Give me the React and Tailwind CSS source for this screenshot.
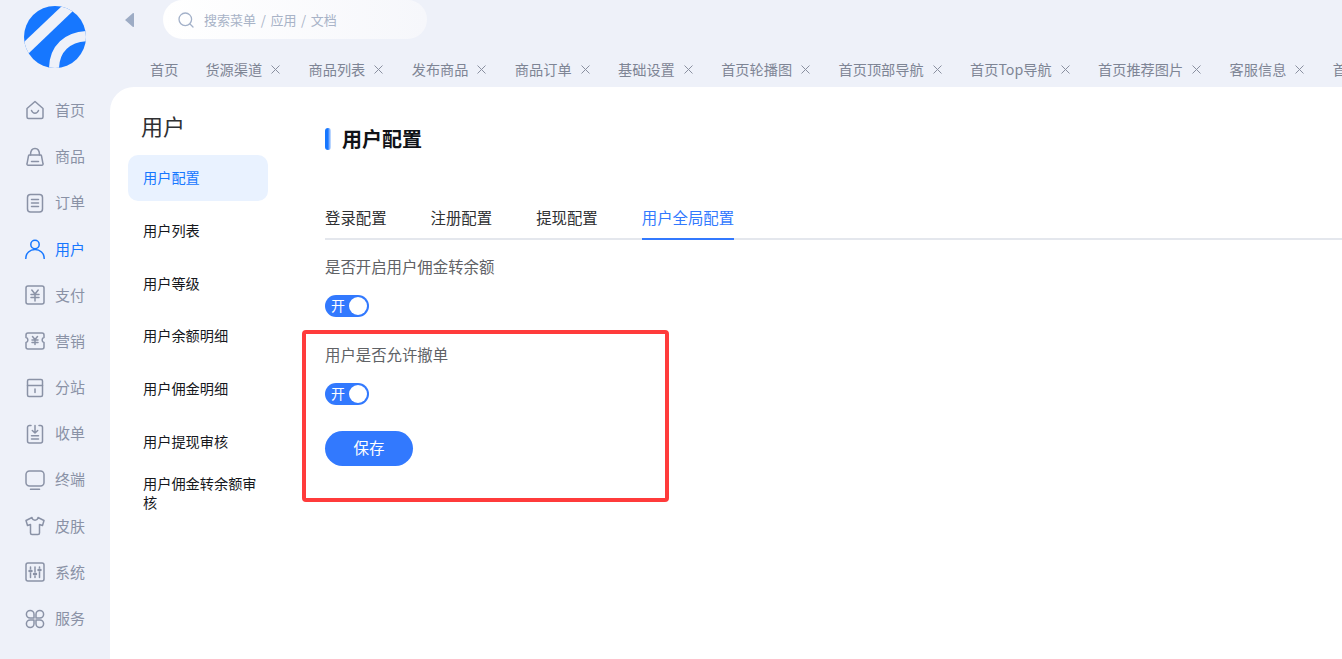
import React from 'react';

const font = { fontFamily: '"Noto Sans CJK SC", "Liberation Sans", sans-serif' };

const Logo = () => (
    <svg width="62" height="62" viewBox="0 0 62 62">
        <defs>
            <clipPath id="logoClip"><circle cx="31" cy="31" r="31" /></clipPath>
        </defs>
        <g clipPath="url(#logoClip)">
            <rect width="62" height="62" fill="#1677ff" />
            <polygon points="40,-2 50,4 4,48 -2,38" fill="#eef1f9" />
            <path d="M66 30 C44 30 29 42 30 66" fill="none" stroke="#eef1f9" strokeWidth="10" />
        </g>
    </svg>
);

const navIcons = {
    home: <><path d="M2 8.500 10 1.500l8 7V17a1.500 1.500 0 0 1-1.500 1.500h-13A1.500 1.500 0 0 1 2 17Z" /><path d="M6.500 10.500c1.500 3.500 5.500 3.500 7 0" /></>,
    goods: <><path d="M4.500 8h11a1 1 0 0 1 1 .8l1.500 8a1.200 1.200 0 0 1-1.200 1.500H3.200A1.200 1.200 0 0 1 2 16.800l1.500-8a1 1 0 0 1 1-.8Z" /><path d="M5.500 8C5.500 3.500 7.500 1.500 10 1.500s4.500 2 4.500 6.500" /><path d="M6.500 14.500h7" /></>,
    order: <><rect x="2.500" y="1.500" width="15" height="17.500" rx="3" /><path d="M6.500 6.500h7M6.500 10h7M6.500 13.500h7" /></>,
    user: <><circle cx="10" cy="5.500" r="4.200" /><path d="M.8 19.500C.8 14 5 10.500 10 10.500s9.200 3.500 9.200 9" /></>,
    pay: <><rect x="1" y="1" width="18" height="18" rx="2" /><path d="m6.800 5 3.200 4 3.200-4M6 9.500h8M6 12.500h8M10 9v7" /></>,
    market: <><path d="M3 2h14a2 2 0 0 1 2 2v2.500c-2.500.5-2.500 4.500 0 5V16a2 2 0 0 1-2 2H3a2 2 0 0 1-2-2v-4.500c2.500-.5 2.500-4.500 0-5V4a2 2 0 0 1 2-2Z" /><path d="m7.500 5.500 2.500 3 2.500-3M7 9h6M7 11.500h6M10 8.500v5" /></>,
    branch: <><path d="M4 1.500h12a1.500 1.500 0 0 1 1.500 1.500v4.500h-15V3A1.500 1.500 0 0 1 4 1.500Z" /><path d="M2.500 7.500V17A1.500 1.500 0 0 0 4 18.500h12a1.500 1.500 0 0 0 1.500-1.500V7.500" /><path d="M10 11v3.500" /></>,
    receipt: <><path d="M6 1.500H4.500a2 2 0 0 0-2 2V17a2 2 0 0 0 2 2h11a2 2 0 0 0 2-2V3.500a2 2 0 0 0-2-2H14" /><path d="M10 1.500V9M7.300 6.500 10 9l2.700-2.500M6.500 11.800h7M6.500 15h7" /></>,
    terminal: <><rect x="1" y="1" width="18" height="15" rx="3.500" /><path d="M5.500 19.300h9" /></>,
    skin: <path d="M7 1.500 1 4.500l1.500 5 3-1V17a1.500 1.500 0 0 0 1.500 1.500h6a1.500 1.500 0 0 0 1.500-1.500V8.500l3 1 1.500-5-6-3c-.5 3.500-5.500 3.500-6 0Z" />,
    system: <><rect x="1" y="1" width="18" height="18" rx="2" /><path d="M5.500 5v2M5.500 11v4.500M10 5v5M10 14v1.500M14.500 5v1M14.500 10v5.500" /><path d="M4.500 9h2M9 12h2M13.500 8h2" strokeWidth="2.400" /></>,
    service: <path d="M9 9H5.200a3.800 3.800 0 1 1 3.800-3.800ZM11 9V5.200A3.800 3.800 0 1 1 14.800 9ZM9 11v3.800A3.800 3.800 0 1 1 5.200 11ZM11 11h3.800a3.800 3.800 0 1 1-3.800 3.800Z" />,
};

const navItems = [
    ['首页', 'home'], ['商品', 'goods'], ['订单', 'order'], ['用户', 'user'],
    ['支付', 'pay'], ['营销', 'market'], ['分站', 'branch'], ['收单', 'receipt'],
    ['终端', 'terminal'], ['皮肤', 'skin'], ['系统', 'system'], ['服务', 'service'],
];

const tabs = ['货源渠道', '商品列表', '发布商品', '商品订单', '基础设置', '首页轮播图', '首页顶部导航', '首页Top导航', '首页推荐图片', '客服信息'];

const menu = ['用户列表', '用户等级', '用户余额明细', '用户佣金明细', '用户提现审核'];

const NavItem = ({ label, icon }) => {
    const active = label === '用户';
    return (
        <div className={active ? 'flex h-[46.2px] items-center text-[#1677ff]' : 'flex h-[46.2px] items-center text-[#8a92a6]'}>
            <svg className="ml-[25px] shrink-0" width="20" height="20" viewBox="0 0 20 20" fill="none" stroke="currentColor" strokeWidth="1.500" strokeLinecap="round" strokeLinejoin="round">
                {navIcons[icon]}
            </svg>
            <span className="ml-[10px] pb-[2px] text-[15px] leading-none">{label}</span>
        </div>
    );
};

const Close = () => (
    <svg className="ml-[9px]" width="9" height="9" viewBox="0 0 9 9" stroke="#8a90a0" strokeWidth="1">
        <path d="M.5.500l8 8M8.500.500l-8 8" />
    </svg>
);

const Toggle = () => (
    <div className="flex h-[22px] w-[44px] items-center justify-between rounded-full bg-[#3279fe] pl-[6px] pr-[2px]">
        <span className="pb-[2px] text-[14px] leading-none text-white">开</span>
        <span className="h-[18px] w-[18px] rounded-full bg-white" />
    </div>
);

const App = () => (
    <div className="flex h-[659px] w-[1342px] overflow-hidden bg-[#eef1f9]" style={font}>
        <aside className="w-[110px] shrink-0">
            <div className="h-[87.4px] pl-[24px] pt-[6px]"><Logo /></div>
            {navItems.map(([label, icon]) => <NavItem key={label} label={label} icon={icon} />)}
        </aside>

        <div className="flex min-w-0 flex-1 flex-col">
            <header className="h-[87px] shrink-0">
                <div className="flex h-[39px] items-center">
                    <svg className="ml-[15px]" width="10" height="14" viewBox="0 0 10 14" fill="#9dacc5">
                        <path d="M9 .8v12.400a.8.8 0 0 1-1.300.6L.6 7.600a.8.8 0 0 1 0-1.200L7.700.2A.8.8 0 0 1 9 .8Z" />
                    </svg>
                    <div className="ml-[28px] flex h-[39px] w-[264px] items-center rounded-[20px] bg-gradient-to-r from-white to-[#f6f7fb] pl-[15px]">
                        <svg width="16" height="16" viewBox="0 0 16 16" fill="none" stroke="#a3b1c9" strokeWidth="1.300" strokeLinecap="round">
                            <circle cx="7.300" cy="7.300" r="6.300" /><path d="m12 12 3 3" />
                        </svg>
                        <span className="ml-[10px] text-[13px] leading-none text-[#a8b3c7] [word-spacing:1.750px]">搜索菜单 / 应用 / 文档</span>
                    </div>
                </div>
                <div className="ml-[40px] mt-[21px] flex h-[20px] items-center whitespace-nowrap text-[14.2px] leading-none text-[#7e8595]">
                    <span className="mr-[27px] pb-[2px]">首页</span>
                    {tabs.map((t) => (
                        <div key={t} className="mr-[28.400px] flex shrink-0 items-center">
                            <span className="pb-[2px]">{t}</span>
                            <Close />
                        </div>
                    ))}
                    <span className="pb-[2px]">首页</span>
                </div>
            </header>

            <main className="relative flex flex-1 rounded-tl-[24px] bg-white">
                <div className="ml-[18px] w-[140px] shrink-0">
                    <h2 className="mb-[17px] mt-[25px] pl-[13px] text-[22px] font-normal leading-[26px] text-[#303133]">用户</h2>
                    <div className="flex h-[46px] items-center rounded-[10px] bg-[#e9f2ff] pl-[15px] text-[14.200px] text-[#1677ff]">用户配置</div>
                    {menu.map((m) => (
                        <div key={m} className="mt-[6.700px] flex h-[46px] items-center pl-[15px] text-[14.200px] text-[#16181d]">{m}</div>
                    ))}
                    <div className="mt-[10px] pl-[15px] pr-[6px] text-[14.200px] leading-[19px] text-[#16181d]">用户佣金转余额审核</div>
                </div>

                <div className="ml-[57px] min-w-0 flex-1">
                    <div className="mt-[41px] flex h-[22px] items-center">
                        <span className="h-[22px] w-[6px] rounded-[3px] bg-gradient-to-r from-[#1677ff] from-50% to-[#d6e6ff]" />
                        <h1 className="ml-[11px] text-[20px] font-bold leading-none text-[#111318]">用户配置</h1>
                    </div>

                    <div className="mt-[50px] flex h-[40px] gap-[44px] border-b-2 border-[#e4e7ed] text-[15.400px] text-[#303133]">
                        <div className="flex h-[40px] items-center pb-[5px]">登录配置</div>
                        <div className="flex h-[40px] items-center pb-[5px]">注册配置</div>
                        <div className="flex h-[40px] items-center pb-[5px]">提现配置</div>
                        <div className="flex h-[40px] items-center border-b-2 border-[#3279fe] pb-[3px] text-[#3279fe]">用户全局配置</div>
                    </div>

                    <p className="mt-[15px] text-[15.400px] leading-[22px] text-[#606266]">是否开启用户佣金转余额</p>
                    <div className="mt-[18px]"><Toggle /></div>

                    <p className="mt-[26px] text-[15.400px] leading-[22px] text-[#606266]">用户是否允许撤单</p>
                    <div className="mt-[18px]"><Toggle /></div>

                    <button className="mt-[26px] h-[35px] w-[88px] rounded-full bg-[#3279fe] pb-[1px] text-[15.500px] text-white">保存</button>
                </div>

                <div className="absolute left-[192px] top-[243px] h-[172px] w-[367px] rounded-[4px] border-4 border-[#ff3b3b]" />
            </main>
        </div>
    </div>
);

export default App;
